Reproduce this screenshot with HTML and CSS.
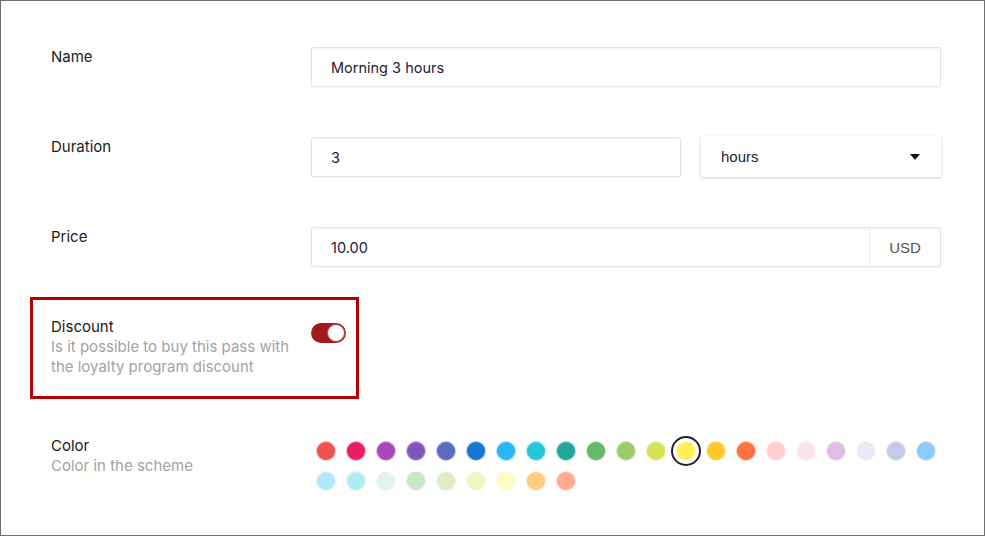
FILE: index.html
```html
<!DOCTYPE html>
<html lang="en">
<head>
  <meta charset="UTF-8">
  <meta name="viewport" content="width=device-width, initial-scale=1.0">
  <title>Pass settings</title>
  <link rel="stylesheet" href="styles.css">
</head>
<body>
  <div class="frame">
    <form class="pass-form">
      <div class="row">
        <div class="label"><div class="title">Name</div></div>
        <div class="control">
          <input class="field" type="text" value="Morning 3 hours">
        </div>
      </div>

      <div class="row">
        <div class="label"><div class="title">Duration</div></div>
        <div class="control duration">
          <input class="field amount" type="text" value="3">
          <div class="select">
            <span>hours</span>
            <span class="caret"></span>
          </div>
        </div>
      </div>

      <div class="row">
        <div class="label"><div class="title">Price</div></div>
        <div class="control">
          <div class="field group">
            <span class="value">10.00</span>
            <span class="addon">USD</span>
          </div>
        </div>
      </div>

      <div class="row discount-row">
        <div class="highlight"></div>
        <div class="label">
          <div class="title">Discount</div>
          <div class="hint">Is it possible to buy this pass with the loyalty program discount</div>
        </div>
        <div class="control">
          <span class="toggle on"><span class="knob"></span></span>
        </div>
      </div>

      <div class="row color-row">
        <div class="label">
          <div class="title">Color</div>
          <div class="hint">Color in the scheme</div>
        </div>
        <div class="control swatches">
          <span class="swatch" style="background:#ef5350"></span>
          <span class="swatch" style="background:#e91e63"></span>
          <span class="swatch" style="background:#ab47bc"></span>
          <span class="swatch" style="background:#7e57c2"></span>
          <span class="swatch" style="background:#5c6bc0"></span>
          <span class="swatch" style="background:#1976d2"></span>
          <span class="swatch" style="background:#29b6f6"></span>
          <span class="swatch" style="background:#26c6da"></span>
          <span class="swatch" style="background:#26a69a"></span>
          <span class="swatch" style="background:#66bb6a"></span>
          <span class="swatch" style="background:#9ccc65"></span>
          <span class="swatch" style="background:#d4e157"></span>
          <span class="swatch selected" style="background:#ffee58"></span>
          <span class="swatch" style="background:#ffca28"></span>
          <span class="swatch" style="background:#ff7043"></span>
          <span class="swatch" style="background:#ffcdd2"></span>
          <span class="swatch" style="background:#fce4ec"></span>
          <span class="swatch" style="background:#e1bee7"></span>
          <span class="swatch" style="background:#ede7f6"></span>
          <span class="swatch" style="background:#c5cae9"></span>
          <span class="swatch" style="background:#90caf9"></span>
          <span class="swatch" style="background:#b3e5fc"></span>
          <span class="swatch" style="background:#b2ebf2"></span>
          <span class="swatch" style="background:#e0f2f1"></span>
          <span class="swatch" style="background:#c8e6c9"></span>
          <span class="swatch" style="background:#dcedc8"></span>
          <span class="swatch" style="background:#f0f4c3"></span>
          <span class="swatch" style="background:#fff9c4"></span>
          <span class="swatch" style="background:#ffcc80"></span>
          <span class="swatch" style="background:#ffab91"></span>
        </div>
      </div>
    </form>
  </div>
</body>
</html>
```

FILE: styles.css
```css
body {
  margin: 0;
  padding: 0;
  background: #fff;
  font-family: Inter, "Noto Sans", sans-serif;
  color: #1a1a1a;
}
.frame {
  box-sizing: border-box;
  width: 985px;
  height: 536px;
  border: 1px solid #6e6e6e;
  overflow: hidden;
}
.pass-form {
  padding: 46px 43px 0 50px;
}
.row {
  display: flex;
  align-items: flex-start;
  margin-bottom: 50px;
  position: relative;
}
.label {
  width: 260px;
  flex: none;
  font-size: 15px;
  line-height: 20px;
}
.title {
  color: #1a1a1a;
}
.hint {
  color: #a3a3a3;
  width: 240px;
}
.control {
  flex: 1;
}
.field {
  box-sizing: border-box;
  width: 100%;
  height: 40px;
  border: 1px solid #e4e4e4;
  border-radius: 2px;
  box-shadow: inset 0 1px 2px rgba(0, 0, 0, 0.06), 0 1px 1px rgba(0, 0, 0, 0.04);
  padding: 0 19px;
  font-family: Inter, "Noto Sans", sans-serif;
  font-size: 14.5px;
  color: #2a1733;
  background: #fff;
  outline: none;
}
.duration {
  display: flex;
  gap: 20px;
}
.duration .amount {
  width: 370px;
  flex: none;
}
.select {
  flex: 1;
  height: 41px;
  margin-top: -1px;
  box-sizing: border-box;
  display: flex;
  align-items: center;
  justify-content: space-between;
  padding: 0 21px 0 20px;
  border-radius: 2px;
  box-shadow: 0 1px 3px rgba(0, 0, 0, 0.22);
  font-family: "Liberation Sans", Arial, sans-serif;
  font-size: 15px;
  color: #2a1733;
}
.caret {
  width: 0;
  height: 0;
  border-left: 5px solid transparent;
  border-right: 5px solid transparent;
  border-top: 6px solid #111;
}
.group {
  display: flex;
  align-items: stretch;
  padding: 0;
}
.group .value {
  flex: 1;
  display: flex;
  align-items: center;
  padding-left: 19px;
}
.group .addon {
  width: 70px;
  display: flex;
  align-items: center;
  justify-content: center;
  border-left: 1px solid #ececec;
  font-family: "Liberation Sans", Arial, sans-serif;
  font-size: 15px;
  color: #555;
}
.discount-row {
  margin-top: -16px;
  padding-top: 16px;
  margin-bottom: 59px;
}
.discount-row .control {
  padding-top: 6px;
}
.highlight {
  position: absolute;
  left: -21px;
  top: -4px;
  width: 329px;
  height: 102px;
  box-sizing: border-box;
  border: 3px solid #b30000;
}
.toggle {
  display: block;
  position: relative;
  width: 35px;
  height: 20px;
  border-radius: 10px;
  background: #a11b1b;
}
.toggle .knob {
  position: absolute;
  right: 1px;
  top: 1px;
  width: 16px;
  height: 16px;
  border-radius: 50%;
  background: #fff;
  border: 1px solid #c04040;
}
.swatches {
  display: flex;
  flex-wrap: wrap;
  gap: 10px;
  padding: 5px 0 0 5px;
}
.swatch {
  box-sizing: border-box;
  width: 20px;
  height: 20px;
  border-radius: 50%;
  border: 1px solid rgba(255, 255, 255, 0.6);
  position: relative;
}
.swatch.selected::after {
  content: "";
  position: absolute;
  left: -6px;
  top: -6px;
  width: 30px;
  height: 30px;
  border-radius: 50%;
  border: 2px solid #222;
  box-sizing: border-box;
}
```
